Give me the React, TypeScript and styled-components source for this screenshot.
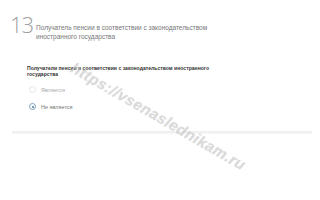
import React from "react";
import styled, { createGlobalStyle } from "styled-components";

const Global = createGlobalStyle`
  html, body { margin: 0; padding: 0; background: #fff; }
  body { width: 320px; height: 200px; overflow: hidden; font-family: "Liberation Sans", Arial, sans-serif; }
`;

const Page = styled.div`
  position: relative;
  width: 320px;
  height: 200px;
  box-sizing: border-box;
  padding-top: 13px;
  overflow: hidden;
`;

const Header = styled.div`
  display: flex;
  align-items: flex-start;
  padding-left: 10px;
`;

const Num = styled.div`
  font-family: "Open Sans", sans-serif;
  font-weight: 300;
  font-size: 22px;
  line-height: 22px;
  color: #a0a0a0;
  width: 26px;
  letter-spacing: -1px;
`;

const Title = styled.div`
  font-size: 6.5px;
  line-height: 9px;
  color: #777;
  padding-top: 10px;
`;

const Section = styled.div`
  padding-left: 27px;
  margin-top: 24px;
`;

const Label = styled.div`
  font-size: 5.1px;
  line-height: 6px;
  font-weight: bold;
  color: #333;
  width: 200px;
`;

const Options = styled.div`
  display: flex;
  flex-direction: column;
  gap: 10px;
  margin-top: 9px;
  padding-left: 2px;
`;

const Option = styled.div<{ $active?: boolean }>`
  display: flex;
  align-items: center;
  gap: 5px;
  font-size: 5.5px;
  color: ${(p) => (p.$active ? "#777" : "#aaa")};
`;

const Radio = styled.span<{ $checked?: boolean }>`
  width: 5px;
  height: 5px;
  border-radius: 50%;
  border: 1px solid ${(p) => (p.$checked ? "#7f9fc0" : "#e6e6e6")};
  display: flex;
  align-items: center;
  justify-content: center;
  &::after {
    content: "";
    width: 2px;
    height: 2px;
    border-radius: 50%;
    background: ${(p) => (p.$checked ? "#4a78a8" : "transparent")};
  }
`;

const Divider = styled.div`
  margin: 21px 8px 0 12px;
  height: 2px;
  background: #f0f0f0;
  border-bottom: 1px solid #f7f7f7;
`;

const Watermark = styled.div`
  position: absolute;
  left: 72px;
  top: 58px;
  transform: rotate(30deg);
  transform-origin: left center;
  font-family: "Liberation Sans", Arial, sans-serif;
  font-style: italic;
  font-size: 15.5px;
  font-weight: bold;
  color: rgba(200, 200, 200, 0.5);
  text-shadow: 0 0 1px rgba(180, 180, 180, 0.3);
  white-space: nowrap;
  pointer-events: none;
  letter-spacing: 0.3px;
`;

export default function App() {
  return (
    <>
      <Global />
      <Page>
        <Header>
          <Num>13</Num>
          <Title>
            Получатель пенсии в соответствии с законодательством
            <br />
            иностранного государства
          </Title>
        </Header>
        <Section>
          <Label>
            Получатели пенсии в соответствии с законодательством иностранного государства
          </Label>
          <Options>
            <Option>
              <Radio />
              Является
            </Option>
            <Option $active>
              <Radio $checked />
              Не является
            </Option>
          </Options>
        </Section>
        <Divider />
        <Watermark>https://vsenaslednikam.ru</Watermark>
      </Page>
    </>
  );
}
